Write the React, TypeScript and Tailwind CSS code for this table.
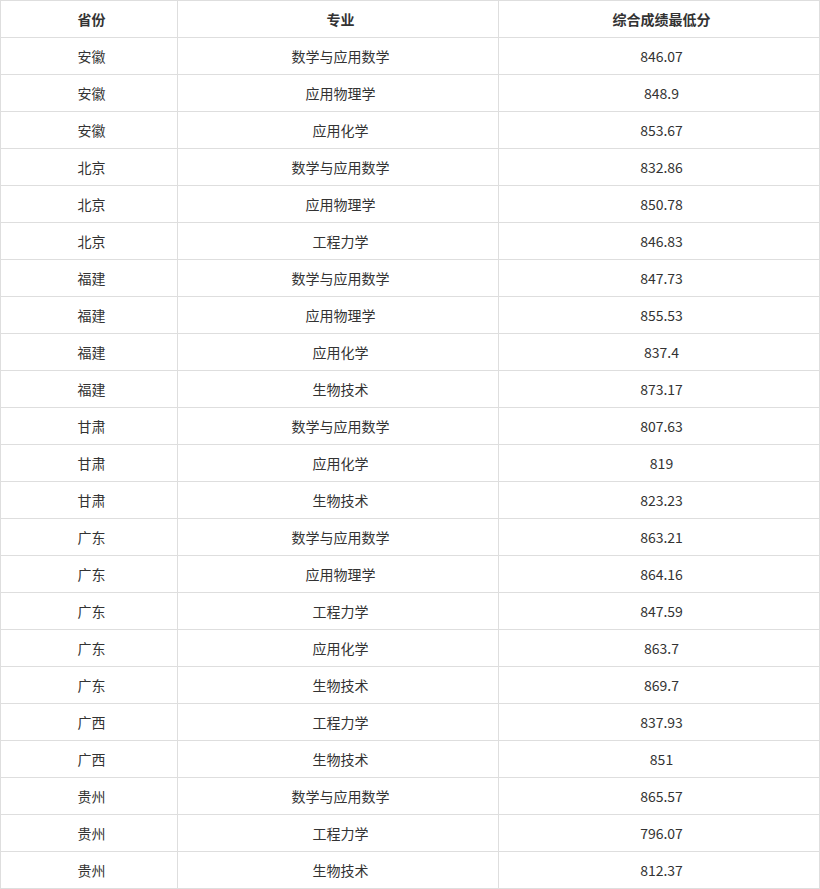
const rows: [string, string, string][] = [
  ['安徽', '数学与应用数学', '846.07'],
  ['安徽', '应用物理学', '848.9'],
  ['安徽', '应用化学', '853.67'],
  ['北京', '数学与应用数学', '832.86'],
  ['北京', '应用物理学', '850.78'],
  ['北京', '工程力学', '846.83'],
  ['福建', '数学与应用数学', '847.73'],
  ['福建', '应用物理学', '855.53'],
  ['福建', '应用化学', '837.4'],
  ['福建', '生物技术', '873.17'],
  ['甘肃', '数学与应用数学', '807.63'],
  ['甘肃', '应用化学', '819'],
  ['甘肃', '生物技术', '823.23'],
  ['广东', '数学与应用数学', '863.21'],
  ['广东', '应用物理学', '864.16'],
  ['广东', '工程力学', '847.59'],
  ['广东', '应用化学', '863.7'],
  ['广东', '生物技术', '869.7'],
  ['广西', '工程力学', '837.93'],
  ['广西', '生物技术', '851'],
  ['贵州', '数学与应用数学', '865.57'],
  ['贵州', '工程力学', '796.07'],
  ['贵州', '生物技术', '812.37'],
];

const cell = 'h-[37px] pl-[5px] flex items-center justify-center border-r border-b border-[#dedede]';

export default function App() {
  return (
    <div className="w-[820px] bg-white text-[14px] text-[#333] font-['Microsoft_YaHei','Noto_Sans_CJK_SC',sans-serif]">
      <div className="grid grid-cols-[177px_321px_321px] border-l border-t border-[#dedede]">
        <div className={`${cell} font-bold`}>省份</div>
        <div className={`${cell} font-bold`}>专业</div>
        <div className={`${cell} font-bold`}>综合成绩最低分</div>
        {rows.map(([prov, major, score], i) => (
          <div key={i} className="contents">
            <div className={cell}>{prov}</div>
            <div className={cell}>{major}</div>
            <div className={cell}>{score}</div>
          </div>
        ))}
      </div>
    </div>
  );
}
